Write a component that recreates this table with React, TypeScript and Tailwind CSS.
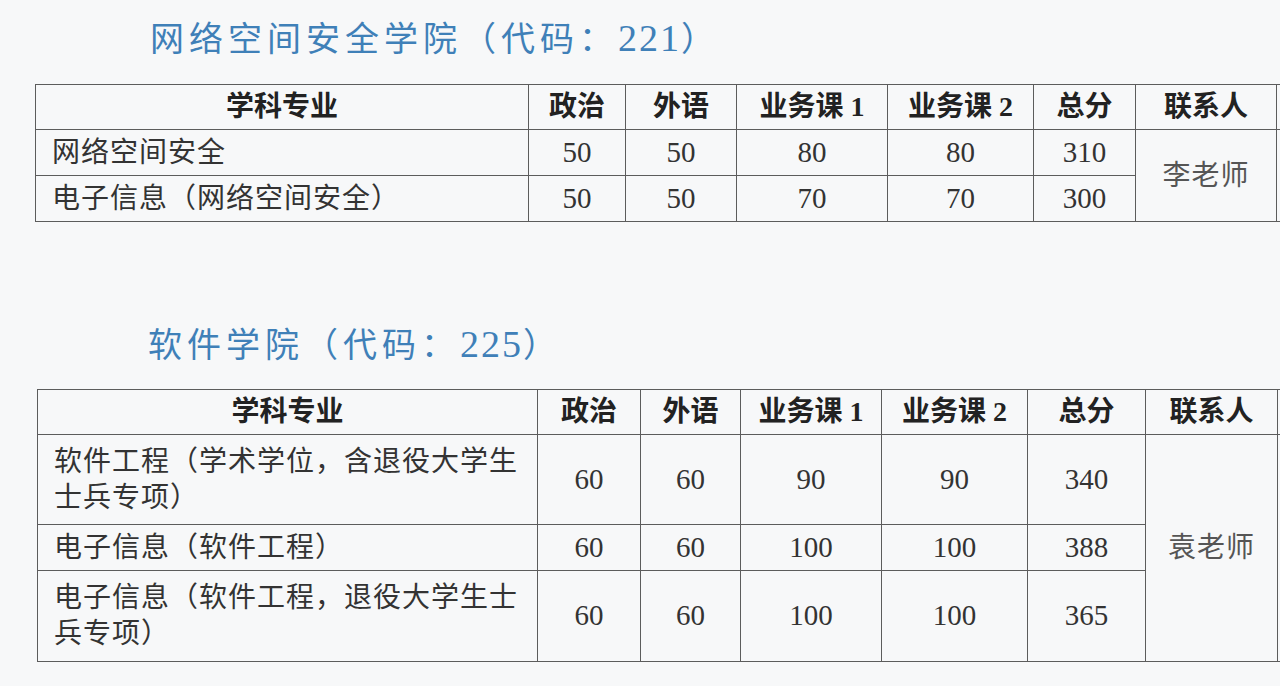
import React from 'react';

type Row = {
  name: React.ReactNode;
  scores: string[];
  h: string;
};

const FONT = "font-['Liberation_Serif','Noto_Sans_CJK_SC',serif]";

const headers = ['学科专业', '政治', '外语', '业务课 1', '业务课 2', '总分', '联系人'];

const ScoreTable: React.FC<{
  cols: string[];
  rows: Row[];
  contact: string;
  ml: string;
  headerH: string;
}> = ({ cols, rows, contact, ml, headerH }) => (
  <table className={`${ml} border-collapse table-fixed w-[1400px] shrink-0`}>
    <colgroup>
      {cols.map((c, i) => (
        <col key={i} className={c} />
      ))}
      <col />
    </colgroup>
    <thead>
      <tr className={headerH}>
        {headers.map((h) => (
          <th key={h} className="border border-[#5c5c5c] font-bold text-[28px] text-[#222] text-center p-0">
            {h}
          </th>
        ))}
        <th className="border border-[#5c5c5c]" />
      </tr>
    </thead>
    <tbody>
      {rows.map((r, i) => (
        <tr key={i} className={r.h}>
          <td className="border border-[#5c5c5c] text-left pl-[16px] text-[28px] tracking-[1px] leading-[36px] text-[#333]">
            {r.name}
          </td>
          {r.scores.map((s, j) => (
            <td key={j} className="border border-[#5c5c5c] text-center text-[29px] text-[#333]">
              {s}
            </td>
          ))}
          {i === 0 && (
            <>
              <td rowSpan={rows.length} className="border border-[#5c5c5c] text-center text-[28px] tracking-[1px] text-[#555]">
                {contact}
              </td>
              <td rowSpan={rows.length} className="border border-[#5c5c5c]" />
            </>
          )}
        </tr>
      ))}
    </tbody>
  </table>
);

const Title: React.FC<{ name: string; code: string; ml: string; mt: string }> = ({ name, code, ml, mt }) => (
  <h2 className={`${mt} ${ml} h-[44px] text-[34px] leading-[44px] tracking-[5px] text-[#3f80b8] font-normal whitespace-nowrap`}>
    {name}（代码：<span className="text-[38px] leading-none tracking-[2px]">{code}</span>）
  </h2>
);

const App: React.FC = () => {
  return (
    <div className={`w-[1280px] h-[686px] overflow-hidden bg-[#f7f8f9] flex flex-col ${FONT}`}>
      {/* 网络空间安全学院 */}
      <Title name="网络空间安全学院" code="221" ml="ml-[150px]" mt="mt-[18px]" />
      <div className="mt-[22px] flex">
        <ScoreTable
          ml="ml-[35px]"
          headerH="h-[45px]"
          cols={['w-[493px]', 'w-[97px]', 'w-[111px]', 'w-[151px]', 'w-[146px]', 'w-[102px]', 'w-[141px]']}
          contact="李老师"
          rows={[
            { name: '网络空间安全', scores: ['50', '50', '80', '80', '310'], h: 'h-[46px]' },
            { name: '电子信息（网络空间安全）', scores: ['50', '50', '70', '70', '300'], h: 'h-[46px]' },
          ]}
        />
      </div>

      {/* 软件学院 */}
      <Title name="软件学院" code="225" ml="ml-[148px]" mt="mt-[102px]" />
      <div className="mt-[21px] flex">
        <ScoreTable
          ml="ml-[37px]"
          headerH="h-[45px]"
          cols={['w-[500px]', 'w-[103px]', 'w-[100px]', 'w-[141px]', 'w-[146px]', 'w-[118px]', 'w-[132px]']}
          contact="袁老师"
          rows={[
            {
              name: (
                <>
                  软件工程（学术学位，含退役大学生
                  <br />
                  士兵专项）
                </>
              ),
              scores: ['60', '60', '90', '90', '340'],
              h: 'h-[90px]',
            },
            { name: '电子信息（软件工程）', scores: ['60', '60', '100', '100', '388'], h: 'h-[46px]' },
            {
              name: (
                <>
                  电子信息（软件工程，退役大学生士
                  <br />
                  兵专项）
                </>
              ),
              scores: ['60', '60', '100', '100', '365'],
              h: 'h-[91px]',
            },
          ]}
        />
      </div>
    </div>
  );
};

export default App;
